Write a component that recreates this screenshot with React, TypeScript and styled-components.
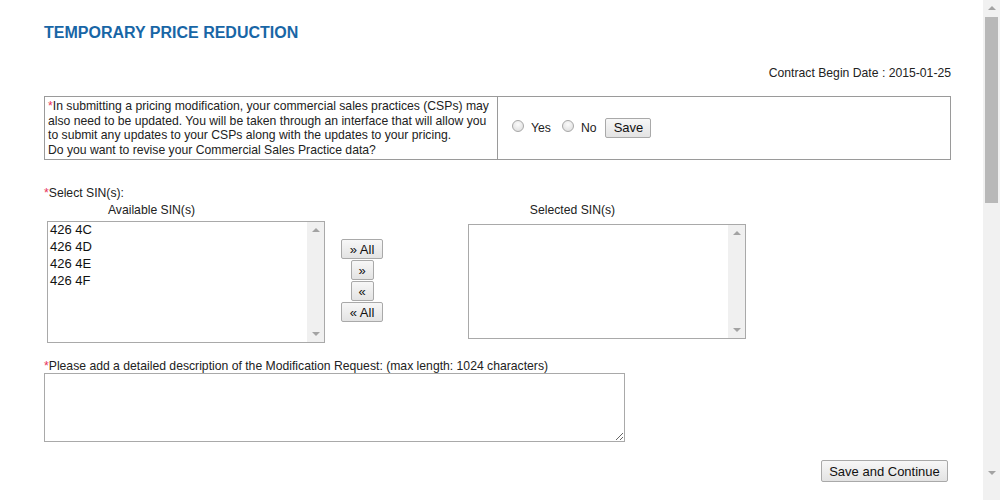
import React from "react";
import styled, { createGlobalStyle } from "styled-components";

const Global = createGlobalStyle`
  html, body { margin: 0; padding: 0; background: #fff; overflow: hidden; }
  body { font-family: "Liberation Sans", Arial, sans-serif; color: #222; }
  * { box-sizing: border-box; }
`;

const Page = styled.div`
  display: flex;
  width: 1000px;
  height: 500px;
  overflow: hidden;
`;

const Main = styled.div`
  flex: 1;
  padding: 24px 32px 0 44px;
  display: flex;
  flex-direction: column;
`;

const Title = styled.h1`
  margin: 0;
  font-size: 16px;
  line-height: 18px;
  font-weight: bold;
  color: #1866a6;
`;

const DateLine = styled.div`
  margin-top: 24px;
  text-align: right;
  font-size: 12.2px;
  line-height: 14px;
  color: #222;
`;

const Box = styled.div`
  margin-top: 16px;
  display: flex;
  border: 1px solid #9a9a9a;
  height: 64px;
`;

const BoxText = styled.div`
  width: 453px;
  border-right: 1px solid #9a9a9a;
  padding: 2px 3px;
  font-size: 12.2px;
  line-height: 14.5px;
  color: #222;
  white-space: nowrap;
`;

const BoxControls = styled.div`
  flex: 1;
  display: flex;
  align-items: center;
  padding-left: 14px;
  padding-bottom: 1px;
  font-size: 12.2px;
`;

const Star = styled.span`
  color: #e8345c;
`;

const Radio = styled.span`
  width: 12px;
  height: 12px;
  border-radius: 50%;
  border: 1px solid #a7a7a7;
  background: radial-gradient(circle at 50% 35%, #fbfbfb 0%, #e4e4e4 70%, #d6d6d6 100%);
  display: inline-block;
  margin-right: 7px;
  margin-top: -3px;
`;

const RadioLabel = styled.span<{ $gap: number }>`
  margin-right: ${(p) => p.$gap}px;
  color: #222;
`;

const Button = styled.button<{ $w: number; $h?: number }>`
  font-family: "Liberation Sans", Arial, sans-serif;
  font-size: 13px;
  color: #111;
  width: ${(p) => p.$w}px;
  height: ${(p) => p.$h ?? 20}px;
  padding: 0;
  border: 1px solid #a9a9a9;
  border-radius: 2px;
  background: linear-gradient(#f7f7f7, #e3e3e3);
  line-height: 1;
  cursor: pointer;
`;

const Label = styled.div<{ $mt?: number }>`
  margin-top: ${(p) => p.$mt ?? 0}px;
  font-size: 12.2px;
  line-height: 14px;
  color: #222;
`;

const SinRow = styled.div`
  display: flex;
  align-items: flex-start;
  margin-top: 3px;
`;

const SinColumn = styled.div<{ $ml: number }>`
  margin-left: ${(p) => p.$ml}px;
  display: flex;
  flex-direction: column;
  width: 278px;
`;

const ColTitle = styled.div`
  text-align: center;
  padding-right: 69px;
  font-size: 12.2px;
  line-height: 14px;
  color: #222;
`;

const ListBox = styled.div<{ $h: number; $mt: number }>`
  margin-top: ${(p) => p.$mt}px;
  height: ${(p) => p.$h}px;
  border: 1px solid #a9a9a9;
  display: flex;
`;

const ListItems = styled.div`
  flex: 1;
  padding-left: 2px;
  font-size: 13px;
  line-height: 17px;
  margin-top: -1px;
  color: #111;
`;

const InnerScroll = styled.div`
  width: 17px;
  background: #f0f0f0;
  display: flex;
  flex-direction: column;
  justify-content: space-between;
  align-items: center;
  padding: 6px 0 6px;
`;

const Tri = styled.span<{ $down?: boolean }>`
  width: 0;
  height: 0;
  border-left: 4px solid transparent;
  border-right: 4px solid transparent;
  ${(p) =>
    p.$down
      ? "border-top: 4px solid #a3a3a3;"
      : "border-bottom: 4px solid #a3a3a3;"}
`;

const MoveButtons = styled.div`
  margin-left: 16px;
  margin-top: 36px;
  width: 42px;
  display: flex;
  flex-direction: column;
  align-items: center;
  gap: 1px;
`;

const DescArea = styled.textarea`
  width: 581px;
  height: 69px;
  border: 1px solid #a9a9a9;
  resize: both;
  font-family: "Liberation Sans", Arial, sans-serif;
  font-size: 13px;
`;

const Footer = styled.div`
  margin-top: 18px;
  display: flex;
  justify-content: flex-end;
  padding-right: 3px;
`;

const ScrollTrack = styled.div`
  width: 17px;
  height: 500px;
  background: #f1f1f1;
  display: flex;
  flex-direction: column;
  align-items: center;
  padding-top: 6px;
`;

const Thumb = styled.div`
  margin-top: 7px;
  width: 13px;
  height: 186px;
  background: #b8b8b8;
`;

const Spacer = styled.div`
  flex: 1;
`;

const BottomArrow = styled.div`
  padding-bottom: 7px;
`;

export default function App() {
  return (
    <>
      <Global />
      <Page>
        <Main>
          <Title>TEMPORARY PRICE REDUCTION</Title>
          <DateLine>Contract Begin Date : 2015-01-25</DateLine>
          <Box>
            <BoxText>
              <Star>*</Star>In submitting a pricing modification, your commercial sales practices (CSPs) may
              <br />
              also need to be updated. You will be taken through an interface that will allow you
              <br />
              to submit any updates to your CSPs along with the updates to your pricing.
              <br />
              Do you want to revise your Commercial Sales Practice data?
            </BoxText>
            <BoxControls>
              <Radio />
              <RadioLabel $gap={11}>Yes</RadioLabel>
              <Radio />
              <RadioLabel $gap={9}>No</RadioLabel>
              <Button $w={46}>Save</Button>
            </BoxControls>
          </Box>

          <Label $mt={26}>
            <Star>*</Star>Select SIN(s):
          </Label>
          <SinRow>
            <SinColumn $ml={3}>
              <ColTitle>Available SIN(s)</ColTitle>
              <ListBox $h={122} $mt={4}>
                <ListItems>
                  <div>426 4C</div>
                  <div>426 4D</div>
                  <div>426 4E</div>
                  <div>426 4F</div>
                </ListItems>
                <InnerScroll>
                  <Tri />
                  <Tri $down />
                </InnerScroll>
              </ListBox>
            </SinColumn>
            <MoveButtons>
              <Button $w={42}>» All</Button>
              <Button $w={23}>»</Button>
              <Button $w={23}>«</Button>
              <Button $w={42}>« All</Button>
            </MoveButtons>
            <SinColumn $ml={85}>
              <ColTitle>Selected SIN(s)</ColTitle>
              <ListBox $h={115} $mt={7}>
                <ListItems />
                <InnerScroll>
                  <Tri />
                  <Tri $down />
                </InnerScroll>
              </ListBox>
            </SinColumn>
          </SinRow>

          <Label $mt={16}>
            <Star>*</Star>Please add a detailed description of the Modification Request: (max length: 1024 characters)
          </Label>
          <DescArea />

          <Footer>
            <Button $w={127} $h={22}>Save and Continue</Button>
          </Footer>
        </Main>
        <ScrollTrack>
          <Tri />
          <Thumb />
          <Spacer />
          <BottomArrow>
            <Tri $down />
          </BottomArrow>
        </ScrollTrack>
      </Page>
    </>
  );
}
